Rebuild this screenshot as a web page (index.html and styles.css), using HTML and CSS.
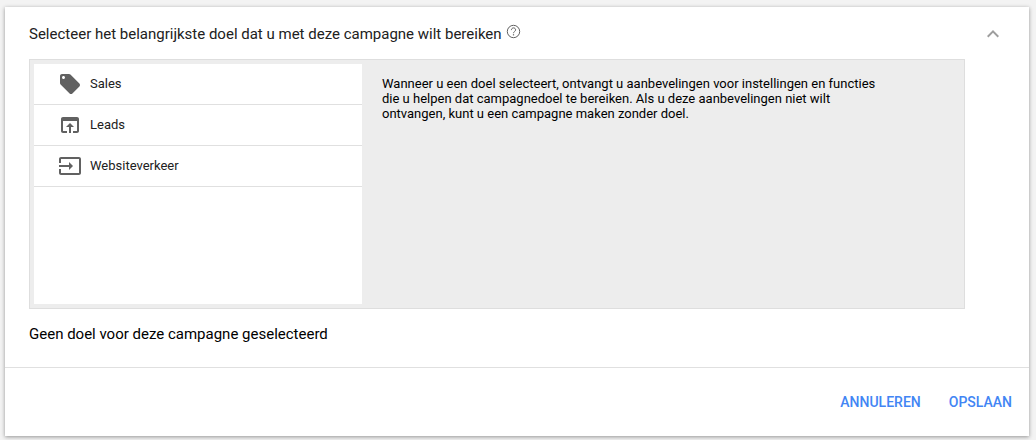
FILE: index.html
```html
<!DOCTYPE html>
<html lang="nl">
<head>
<meta charset="utf-8">
<meta name="viewport" content="width=device-width, initial-scale=1">
<title>Campagnedoel</title>
<link rel="stylesheet" href="styles.css">
</head>
<body>
<main class="card">
  <section class="content">
    <header class="header">
      <h1 class="title">Selecteer het belangrijkste doel dat u met deze campagne wilt bereiken</h1>
      <button class="icon-button help" type="button" aria-label="Help">
        <svg width="15" height="15" viewBox="0 0 15 15" aria-hidden="true"><circle class="line" cx="7.500" cy="7.500" r="6.200"/><path class="line" d="M5.400 6.100c0-1.300.9-2.200 2.100-2.200s2.100.8 2.100 2c0 1.500-2.100 1.700-2.100 3.300"/><path d="M6.900 10.200h1.200v1.200H6.900z"/></svg>
      </button>
      <button class="icon-button collapse" type="button" aria-label="Inklappen">
        <svg width="24" height="24" viewBox="0 0 24 24" aria-hidden="true"><path d="M12 8l-6 6 1.410 1.410L12 10.830l4.590 4.580L18 14z"/></svg>
      </button>
    </header>
    <div class="panel">
      <ul class="goals">
        <li><button class="goal" type="button">
          <svg width="24" height="24" viewBox="0 0 24 24" aria-hidden="true"><path d="M21.410 11.580l-9-9C12.050 2.220 11.550 2 11 2H4c-1.100 0-2 .9-2 2v7c0 .55.220 1.050.590 1.420l9 9c.36.360.860.580 1.410.580.550 0 1.050-.22 1.410-.59l7-7c.37-.36.590-.86.590-1.410 0-.55-.23-1.060-.59-1.420zM5.500 7C4.670 7 4 6.330 4 5.500S4.670 4 5.500 4 7 4.670 7 5.500 6.330 7 5.500 7z"/></svg>
          <span class="goal-name">Sales</span></button></li>
        <li><button class="goal" type="button">
          <svg width="24" height="24" viewBox="0 0 24 24" aria-hidden="true"><path d="M19 4H5c-1.110 0-2 .9-2 2v12c0 1.100.890 2 2 2h4v-2H5V8h14v10h-4v2h4c1.100 0 2-.9 2-2V6c0-1.100-.89-2-2-2zm-7 6l-4 4h3v6h2v-6h3l-4-4z"/></svg>
          <span class="goal-name">Leads</span></button></li>
        <li><button class="goal" type="button">
          <svg width="24" height="24" viewBox="0 0 24 24" aria-hidden="true"><path d="M21 3.010H3c-1.100 0-2 .9-2 2V9h2V4.990h18v14.030H3V15H1v4.010c0 1.100.9 1.980 2 1.980h18c1.100 0 2-.88 2-1.980v-14c0-1.110-.9-2-2-2zM11 16l4-4-4-4v3H1v2h10v3z"/></svg>
          <span class="goal-name">Websiteverkeer</span></button></li>
      </ul>
      <p class="hint">Wanneer u een doel selecteert, ontvangt u aanbevelingen voor instellingen en functies die u helpen dat campagnedoel te bereiken. Als u deze aanbevelingen niet wilt ontvangen, kunt u een campagne maken zonder doel.</p>
    </div>
    <p class="status">Geen doel voor deze campagne geselecteerd</p>
  </section>
  <footer class="actions">
    <button class="action" type="button">ANNULEREN</button>
    <button class="action" type="button">OPSLAAN</button>
  </footer>
</main>
</body>
</html>
```
FILE: styles.css
```css
* {
  box-sizing: border-box;
}

body {
  margin: 0;
  padding: 7px 7px 4px 5px;
  background: #f3f3f3;
  color: #000;
  font-family: Roboto, "Liberation Sans", sans-serif;
  font-size: 13px;
}

button {
  padding: 0;
  border: 0;
  background: none;
  font: inherit;
  cursor: pointer;
}

svg {
  display: block;
  flex: none;
  fill: currentColor;
}

.line {
  fill: none;
  stroke: currentColor;
  stroke-width: 1px;
}

.card {
  background: #fff;
  box-shadow: 0 1px 4px rgba(0, 0, 0, 0.4);
}

.content {
  padding: 14px 24px 20px;
}

.header {
  display: flex;
  align-items: center;
  height: 26px;
}

.title {
  margin: 0;
  color: #212121;
  font-size: 15px;
  font-weight: 400;
  line-height: 24px;
}

.icon-button {
  color: #616161;
}

.help {
  margin: 0 4px 6px;
}

.collapse {
  margin-left: auto;
  color: #9e9e9e;
}

.panel {
  display: flex;
  gap: 20px;
  margin: 12px 40px 0 0;
  padding: 4px;
  border: 1px solid #dedede;
  background: #ededed;
}

.goals {
  flex: 0 0 328px;
  min-height: 240px;
  margin: 0;
  padding: 0;
  background: #fff;
  list-style: none;
}

.goal {
  display: flex;
  align-items: center;
  gap: 8px;
  width: 100%;
  height: 41px;
  padding: 0 24px;
  border-bottom: 1px solid #e0e0e0;
  color: #212121;
}

.goal svg {
  color: #616161;
}

.goal-name {
  padding-bottom: 2px;
}

.hint {
  max-width: 500px;
  margin: 12px 0 0;
  line-height: 15px;
}

.status {
  margin: 13px 0 0;
  padding-bottom: 1px;
  font-size: 15px;
  line-height: 24px;
}

.actions {
  display: flex;
  justify-content: flex-end;
  gap: 28px;
  padding: 16px 17px;
  border-top: 1px solid #e0e0e0;
}

.action {
  height: 36px;
  color: #4285f4;
  font-size: 14px;
  font-weight: 500;
}
```
